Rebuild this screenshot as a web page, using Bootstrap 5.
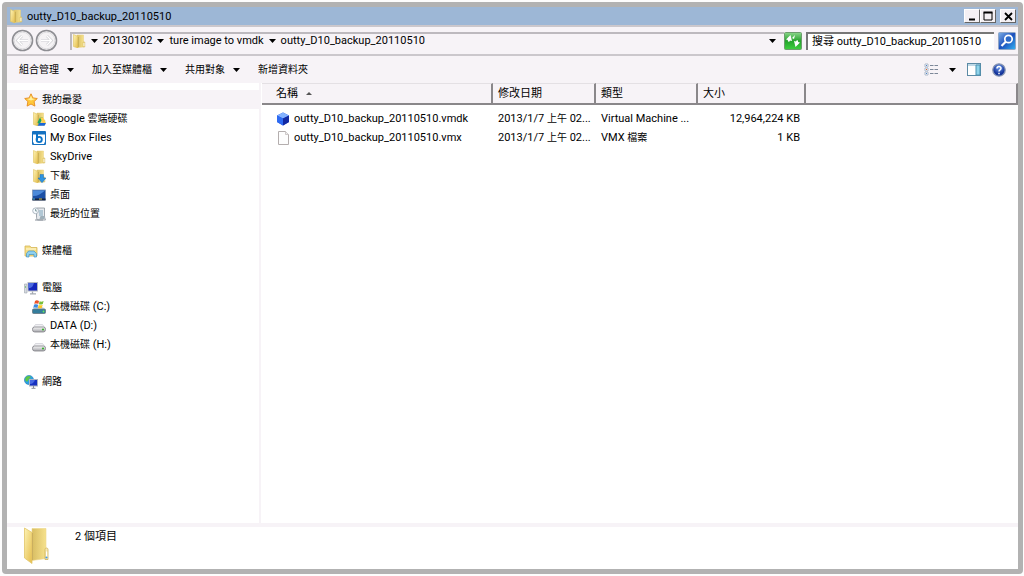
<!DOCTYPE html>
<html lang="zh-Hant">
<head>
<meta charset="utf-8">
<meta name="viewport" content="width=device-width, initial-scale=1">
<title>outty_D10_backup_20110510</title>
<link href="https://cdn.jsdelivr.net/npm/bootstrap@5.3.0/dist/css/bootstrap.min.css" rel="stylesheet">
<style>
  body { font-family: Roboto, "Noto Sans CJK TC", sans-serif; font-size: 11px; line-height: 19px; color: #000; background: #fdfdfd; }
  button, input { font: inherit; color: inherit; }
  svg { display: block; flex: none; }
  .frame { min-height: 100vh; padding: 2px 1px 2px 2px; }
  .win { border: 5px solid #b2b2b2; border-radius: 4px; background: #fff; }
  .titlebar { height: 18px; background: #9db7d6; padding: 0 2px; }
  .title-text { margin-left: 4px; }
  .cap { width: 16px; height: 14px; padding: 0; border: 1px solid; border-color: #fff #666 #666 #fff; background: #f4f0f4; border-radius: 0; display: flex; align-items: center; justify-content: center; }
  .chrome { background: #f7f3f7; }
  .addressbar { height: 31px; border-top: 2px solid #cbc7cc; border-bottom: 2px solid #cbc7cc; padding: 0 2px 0 4px; }
  .plain { border: 0; background: none; padding: 0; display: flex; align-items: center; white-space: nowrap; }
  .path { border-top: 2px solid #bdb9be; border-left: 2px solid #bdb9be; height: 18px; margin-left: 12px; padding: 0 8px 2px 0; min-width: 0; gap: 5px; }
  .search-box { width: 188px; height: 18px; border: 0; border-top: 2px solid #777; border-left: 2px solid #777; border-radius: 0; background: #fff; padding: 0 4px; }
  .toolbar { height: 27px; padding: 0 12px; }
  .menus { gap: 18px; font-size: 10px; }
  .views { gap: 11px; }
  .side { width: 254px; border-right: 2px solid #f7f3f7; padding-top: 7px; }
  .side ul { margin-bottom: 18px; }
  .side a { display: flex; align-items: center; height: 19px; color: #000; text-decoration: none; gap: 4px; padding-left: 25px; }
  .side a.group { padding-left: 17px; }
  .side a.current { background: #f7f3f7; }
  .zh { font-size: 10px; }
  .listing { padding-left: 1px; }
  .files { table-layout: fixed; width: 100%; border-collapse: separate; border-spacing: 0; }
  .files th { background: #f7f3f7; height: 22px; font-weight: 400; padding: 0 5px; border-right: 2px solid #8a878a; border-bottom: 2px solid #8a878a; border-top: 1px solid #e4e0e4; }
  .files td { height: 19px; padding: 0 6px 0 5px; white-space: nowrap; }
  .files td.open-end { padding-right: 0; }
  .files th:first-child, .files td:first-child { padding-left: 14px; }
  .files tbody::before { content: ""; display: block; height: 4px; }
  .c-name { width: 231px; } .c-date { width: 103px; } .c-type { width: 102px; } .c-size { width: 108px; }
  .status { height: 46px; border-top: 4px solid #f7f3f7; padding-left: 16px; }
</style>
</head>
<body>
<svg width="0" height="0" class="position-absolute" aria-hidden="true">
  <defs>
    <linearGradient id="gold" x1="0" x2="1" y1="0" y2="1"><stop offset="0" stop-color="#fdf3b4"/><stop offset="1" stop-color="#e5bd4c"/></linearGradient>
    <linearGradient id="goldback" x1="0" x2="1"><stop offset="0" stop-color="#d8bd62"/><stop offset="1" stop-color="#f6e18c"/></linearGradient>
    <linearGradient id="silver" x1="0" x2="0" y1="0" y2="1"><stop offset="0" stop-color="#fafafa"/><stop offset="1" stop-color="#a4a4aa"/></linearGradient>
    <linearGradient id="green" x1="0" x2="0" y1="0" y2="1"><stop offset="0" stop-color="#8bd58b"/><stop offset=".5" stop-color="#25a32c"/><stop offset="1" stop-color="#3ed13f"/></linearGradient>
    <linearGradient id="blue" x1="0" x2="1" y1="0" y2="1"><stop offset="0" stop-color="#7fb0e6"/><stop offset=".5" stop-color="#1c4fbd"/><stop offset="1" stop-color="#35b5f2"/></linearGradient>
    <radialGradient id="orb" cx=".5" cy=".3"><stop offset="0" stop-color="#6f9bea"/><stop offset="1" stop-color="#15349c"/></radialGradient>
    <symbol id="folder" viewBox="0 0 14 14">
      <path d="M5 1h6.500v12L5 13.500z" fill="url(#goldback)" stroke="#e8cf78" stroke-width=".5"/>
      <path d="M1.500.5L6 2.500V14L1.500 12.500z" fill="url(#gold)" stroke="#dfc25f" stroke-width=".6"/>
      <path d="M6.300 3v10" stroke="#b79a45" stroke-width=".6"/>
      <path d="M11 8h1.800v5H11z" fill="#f3df93" stroke="#d2b65b" stroke-width=".5"/><path d="M11.600 9h.7v3h-.7z" fill="#fff"/>
    </symbol>
    <symbol id="drive" viewBox="0 0 14 14">
      <path d="M3.500 5.500h7l3 4H.5z" fill="#f0f0f3" stroke="#c6c6cc" stroke-width=".6"/>
      <rect x=".5" y="8" width="13" height="5" rx="2.200" fill="url(#silver)" stroke="#808086" stroke-width=".8"/>
      <circle cx="11" cy="10.500" r="1.100" fill="#39b02f"/>
    </symbol>
    <symbol id="down" viewBox="0 0 7 4"><path d="M0 0h7L3.500 4z" fill="#000"/></symbol>
  </defs>
</svg>
<div class="frame d-flex flex-column">
<div class="win flex-grow-1 d-flex flex-column">
  <header class="titlebar d-flex align-items-center">
    <svg width="14" height="14"><use href="#folder"/></svg>
    <span class="title-text flex-grow-1 text-truncate">outty_D10_backup_20110510</span>
    <div class="d-flex">
      <button class="cap" aria-label="最小化"><svg width="9" height="9"><path d="M1 7.500h6" stroke="#000" stroke-width="2"/></svg></button>
      <button class="cap me-1" aria-label="最大化"><svg width="10" height="10"><path d="M1 1.500h8V9H1z" fill="none" stroke="#000"/><path d="M.5 1.500h9" stroke="#000" stroke-width="2"/></svg></button>
      <button class="cap" aria-label="關閉"><svg width="9" height="9"><path d="M1 1l7 7M8 1L1 8" stroke="#000" stroke-width="1.800"/></svg></button>
    </div>
  </header>

  <div class="chrome addressbar d-flex align-items-center">
    <div class="d-flex">
      <button class="plain" aria-label="上一頁"><svg width="23" height="23"><circle cx="11.500" cy="11.500" r="10" fill="#f5f3f5" stroke="#8e8e93" stroke-width="1.600"/><circle cx="11.500" cy="11.500" r="8.300" fill="none" stroke="#dedde0"/><path d="M17 11.500H6.500M11 7l-4.500 4.500L11 16" stroke="#cfced3" stroke-width="2.600" fill="none"/><path d="M17 11.500H6.500M11 7l-4.500 4.500L11 16" stroke="#fff" stroke-width="1.300" fill="none"/></svg></button>
      <button class="plain" aria-label="下一頁"><svg width="24" height="23"><circle cx="12.500" cy="11.500" r="10" fill="#f5f3f5" stroke="#8e8e93" stroke-width="1.600"/><circle cx="12.500" cy="11.500" r="8.300" fill="none" stroke="#dedde0"/><path d="M7 11.500h10.500M13 7l4.500 4.500L13 16" stroke="#cfced3" stroke-width="2.600" fill="none"/><path d="M7 11.500h10.500M13 7l4.500 4.500L13 16" stroke="#fff" stroke-width="1.300" fill="none"/></svg></button>
    </div>
    <nav class="path d-flex align-items-center flex-grow-1" aria-label="路徑">
      <svg width="14" height="14"><use href="#folder"/></svg>
      <svg width="7" height="4"><use href="#down"/></svg>
      <button class="plain">20130102</button>
      <svg width="7" height="4"><use href="#down"/></svg>
      <button class="plain">ture image to vmdk</button>
      <svg width="7" height="4"><use href="#down"/></svg>
      <button class="plain">outty_D10_backup_20110510</button>
      <button class="plain ms-auto" aria-label="先前的位置"><svg width="7" height="4"><use href="#down"/></svg></button>
    </nav>
    <button class="plain me-1" aria-label="重新整理"><svg width="18" height="18"><rect x=".5" y=".5" width="17" height="17" rx="1" fill="url(#green)" stroke="#6d9c6d"/><path d="M5 9.500c-.5-1.500 0-2.500.5-3.500M13 8.500c.5 1.500 0 2.500-.5 3.500" stroke="#fff" stroke-width="2" fill="none"/><path d="M2 7.500L6.500 3l1.500 6zM16 10.500L11.500 15 10 9zM8 6l3-3-1 4z" fill="#fff"/></svg></button>
    <form class="d-flex align-items-center" role="search" onsubmit="return false">
      <input class="search-box" type="text" aria-label="搜尋" value="搜尋 outty_D10_backup_20110510">
      <button class="plain ms-1" aria-label="開始搜尋"><svg width="18" height="18"><rect x=".5" y=".5" width="17" height="17" rx="1" fill="url(#blue)" stroke="#8fa6c6"/><circle cx="10.500" cy="7" r="3.700" fill="#2c68c8" stroke="#fff" stroke-width="1.700"/><path d="M7.700 9.800L3.500 14" stroke="#fff" stroke-width="2.200"/></svg></button>
    </form>
  </div>

  <div class="chrome toolbar d-flex align-items-center">
    <div class="menus d-flex me-auto">
      <button class="plain gap-2">組合管理 <svg width="7" height="4"><use href="#down"/></svg></button>
      <button class="plain gap-2">加入至媒體櫃 <svg width="7" height="4"><use href="#down"/></svg></button>
      <button class="plain gap-2">共用對象 <svg width="7" height="4"><use href="#down"/></svg></button>
      <button class="plain">新增資料夾</button>
    </div>
    <div class="views d-flex align-items-center">
      <button class="plain" aria-label="變更檢視"><svg width="14" height="13"><path d="M1 1h3v3H1zM1 5h3v3H1zM1 9h3v3H1z" fill="#fff" stroke="#aeb9cb"/><path d="M2 2h1v1H2zM2 10h1v1H2z" fill="#4b81c4"/><path d="M2 6h1v1H2z" fill="#d9622c"/><path d="M6 2.500h8M6 6.500h8M6 10.500h8" stroke="#7c8798" stroke-dasharray="3.500 1"/></svg></button>
      <button class="plain" aria-label="更多檢視選項"><svg width="7" height="4"><use href="#down"/></svg></button>
      <button class="plain" aria-label="預覽窗格"><svg width="14" height="13"><rect x=".5" y=".5" width="13" height="12" fill="#fff" stroke="#5c8aa5"/><path d="M1 2h12" stroke="#bfd8e6" stroke-width="2"/><path d="M9 2h4v10H9z" fill="#8fd3ea" stroke="#4a92b2"/></svg></button>
      <button class="plain" aria-label="說明"><svg width="14" height="14"><circle cx="7" cy="7" r="6.200" fill="url(#orb)" stroke="#8896b4" stroke-width="1.300"/><path d="M5 5.500C5 3 9 3 9 5.300 9 7 7 6.800 7 8.500M7 9.800v1.500" stroke="#fff" stroke-width="1.500" fill="none"/></svg></button>
    </div>
  </div>

  <div class="d-flex flex-grow-1">
    <nav class="side flex-shrink-0" aria-label="瀏覽窗格">
      <ul class="list-unstyled">
        <li><a class="group current zh" href="#"><svg width="14" height="14"><path d="M7 .8l1.900 4.100 4.400.6-3.200 3.100.8 4.500L7 11l-3.900 2.100.8-4.500L.7 5.500l4.400-.6z" fill="#ffc83c" stroke="#e58a1c" stroke-width=".9"/><path d="M7 2.500l1.200 3 2.800.5-4 1.500-4-1.500 2.800-.5z" fill="#fff0a0"/></svg>我的最愛</a></li>
        <li><a href="#"><svg width="14" height="14"><use href="#folder"/><path d="M8 5.500h3l-3.500 7-2-2z" fill="#1da462"/><path d="M8 5.500h3l3 5.500h-3z" fill="#ffd04b"/><path d="M7.500 11H14l-1.500 2.800H5.500z" fill="#1a66d6"/></svg><span>Google <span class="zh">雲端硬碟</span></span></a></li>
        <li><a href="#"><svg width="14" height="14"><rect width="14" height="14" rx="1" fill="#1672c1"/><path d="M1 3.500h12v7L12 13H2l-1-2.500z" fill="#fff"/><path d="M5 3v6" stroke="#0c74c8" stroke-width="2"/><circle cx="7.200" cy="8.500" r="2.600" fill="none" stroke="#0c74c8" stroke-width="1.900"/></svg>My Box Files</a></li>
        <li><a href="#"><svg width="14" height="14"><use href="#folder"/></svg>SkyDrive</a></li>
        <li><a class="zh" href="#"><svg width="14" height="14"><use href="#folder"/><path d="M8 5.500h3.500V9H14l-4 4.700L6 9h2z" fill="#2f93e0" stroke="#1b6cb4" stroke-width=".5"/></svg>下載</a></li>
        <li><a class="zh" href="#"><svg width="14" height="14"><rect x=".5" y="2" width="13" height="10" fill="#1c50a5" stroke="#879bb8" stroke-width=".8"/><path d="M1 8C6 8 9 6 13 2.500H1z" fill="#4c8ad9"/><path d="M.5 11.500h13" stroke="#16233c" stroke-width="2"/><path d="M1 11h2" stroke="#49b9ee"/><path d="M7 11h3" stroke="#d2bf4b"/></svg>桌面</a></li>
        <li><a class="zh" href="#"><svg width="14" height="14"><path d="M4.500 1h8v8c0 2 1 3 1 4h-8c-1-1-1-2-1-4z" fill="#e6e9ed" stroke="#8a929b" stroke-width=".8"/><path d="M7 4h4M7 6h4M7 8h4" stroke="#7da6bd"/><path d="M8.500 9h4v3h-5z" fill="#9eafb9"/><path d="M3 13h8" stroke="#8a929b"/><circle cx="3.600" cy="3.800" r="2.900" fill="#f7fbff" stroke="#a6b1bb" stroke-width=".9"/><path d="M3.600 2v2h1.500" stroke="#577" stroke-width=".7" fill="none"/></svg>最近的位置</a></li>
      </ul>
      <ul class="list-unstyled">
        <li><a class="group zh" href="#"><svg width="14" height="14"><path d="M1 2h5l1 1.500h6V12H1z" fill="#f5dd83" stroke="#d5b658" stroke-width=".8"/><path d="M2 5h10" stroke="#fffbe0"/><path d="M2.500 13V9.500L4.500 7h5.500l2.500 2.500V13h-2.500v-2.500H5V13z" fill="#8ed0ef" stroke="#4294c4" stroke-width=".7"/></svg>媒體櫃</a></li>
      </ul>
      <ul class="list-unstyled">
        <li><a class="group zh" href="#"><svg width="14" height="14"><path d="M.5 3h2.500v9H.5z" fill="#d6dae0" stroke="#a0a6ae" stroke-width=".6"/><path d="M1 6h1" stroke="#3bac35"/><rect x="4" y="1.500" width="9.500" height="8.500" fill="#1527bc" stroke="#b4b9c1"/><path d="M4.500 7C8 7 9 5 10 2H4.500z" fill="#4c6ae0"/><path d="M8.500 10.500v2M6 12.800h6" stroke="#a4aab2" stroke-width="1.300"/></svg>電腦</a></li>
        <li><a href="#"><svg width="14" height="14"><path d="M3.500 7h7.500l2.500 3H.5z" fill="#d6dfe6"/><rect x=".5" y="9" width="13" height="4.500" rx="1" fill="#347d9c" stroke="#657782" stroke-width=".8"/><path d="M3 1c1.500-1 2.500-.7 4 0L6.300 4C5 3.500 4 3.300 2.300 4z" fill="#ed5327"/><path d="M7.600 1.300c1.500.6 2.500.4 4-.3l-.8 3c-1.500.7-2.400.8-3.900.2z" fill="#79bf39"/><path d="M2 4.800c1.700-.8 2.700-.6 4.200 0L5.400 8C4 7.500 3 7.300 1.300 8z" fill="#3b8be1"/><path d="M6.700 5c1.500.5 2.600.4 4-.2L9.800 8c-1.400.6-2.500.6-4 .1z" fill="#fdc728"/><circle cx="11.500" cy="11.500" r=".9" fill="#6dea57"/></svg><span><span class="zh">本機磁碟</span> (C:)</span></a></li>
        <li><a href="#"><svg width="14" height="14"><use href="#drive"/></svg>DATA (D:)</a></li>
        <li><a href="#"><svg width="14" height="14"><use href="#drive"/></svg><span><span class="zh">本機磁碟</span> (H:)</span></a></li>
      </ul>
      <ul class="list-unstyled">
        <li><a class="group zh" href="#"><svg width="14" height="14"><circle cx="5" cy="5" r="4.600" fill="#2ba1e3" stroke="#1b6fae" stroke-width=".5"/><path d="M2 2c2-1.500 4-1.500 5 0L5 4 3 7 1 5zM6 5h3L7 9z" fill="#5fc546"/><rect x="5.500" y="4.500" width="8" height="6.500" fill="#1630c0" stroke="#aab2c2"/><path d="M6 9c3 0 4-2 5-4H6z" fill="#4769e2"/><path d="M9.500 11v2M7.500 13.300h4" stroke="#888e98"/></svg>網路</a></li>
      </ul>
    </nav>

    <main class="listing flex-grow-1">
      <table class="files">
        <colgroup><col class="c-name"><col class="c-date"><col class="c-type"><col class="c-size"><col></colgroup>
        <thead><tr>
          <th scope="col"><span class="d-flex align-items-center">名稱 <svg class="ms-2" width="6" height="3"><path d="M3 0l3 3H0z" fill="#555"/></svg></span></th>
          <th scope="col">修改日期</th><th scope="col">類型</th><th scope="col">大小</th><th scope="col" aria-label="空白欄"></th>
        </tr></thead>
        <tbody>
          <tr><td><span class="d-flex align-items-center"><svg class="me-1" width="14" height="14"><path d="M7 .5l6 3v6.500L7 13.500 1 10V3.500z" fill="#1a48de"/><path d="M7 .5l6 3L7 6.500l-6-3z" fill="#83b2ff"/><path d="M7 6.500l6-3V10l-6 3.500z" fill="#1229a2"/><path d="M1 3.500l6 3v7L1 10z" fill="#2e6bf2"/></svg>outty_D10_backup_20110510.vmdk</span></td><td class="open-end">2013/1/7 <span class="zh">上午</span> 02...</td><td class="open-end">Virtual Machine ...</td><td class="text-end">12,964,224 KB</td><td></td></tr>
          <tr><td><span class="d-flex align-items-center"><svg class="me-1" width="14" height="14"><path d="M2.500.5h7l3 3v10h-10z" fill="#fdfdfd" stroke="#b4aeae"/><path d="M9.500.5v3h3" fill="#eee" stroke="#c4bebe" stroke-width=".8"/></svg>outty_D10_backup_20110510.vmx</span></td><td class="open-end">2013/1/7 <span class="zh">上午</span> 02...</td><td>VMX <span class="zh">檔案</span></td><td class="text-end">1 KB</td><td></td></tr>
        </tbody>
      </table>
    </main>
  </div>

  <footer class="status d-flex">
    <svg width="28" height="38" viewBox="0 0 28 38"><path d="M9 1.500h14v30l-14 2z" fill="url(#goldback)" stroke="#ecd68a" stroke-width=".6"/><path d="M1.500 1L9 5.500v31L1.500 31z" fill="url(#gold)" stroke="#e2c568" stroke-width=".8"/><path d="M9.500 6v27" stroke="#c4a85c" stroke-width=".8"/><path d="M22 22.500c0-2 3-2 3 0v10h-3z" fill="#f7e9b4" stroke="#cfb25b" stroke-width=".8"/><path d="M23 24.500h1.200v7H23z" fill="#fff"/><circle cx="23.500" cy="30.500" r="1.100" fill="#4c9be0"/></svg>
    <span class="ms-4">2 個項目</span>
  </footer>
</div>
</div>
</body>
</html>
